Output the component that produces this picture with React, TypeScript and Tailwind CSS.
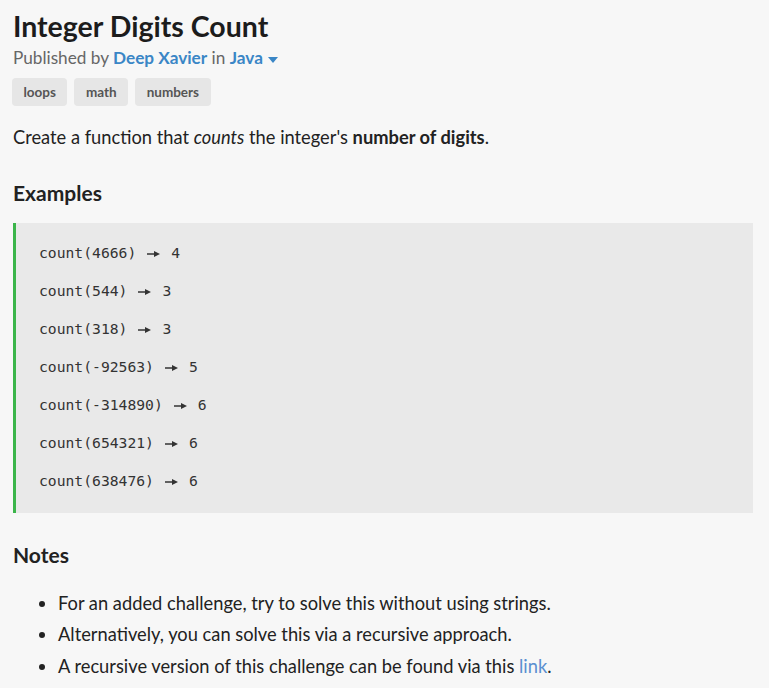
import React from 'react'

const examples = [
  ['count(4666)', '4'],
  ['count(544)', '3'],
  ['count(318)', '3'],
  ['count(-92563)', '5'],
  ['count(-314890)', '6'],
  ['count(654321)', '6'],
  ['count(638476)', '6'],
]

const tags = ['loops', 'math', 'numbers']

const Arrow = () => (
  <svg className="mx-[11px] inline-block align-middle" width="13" height="8" viewBox="0 0 13 8">
    <path d="M0 4 H8" stroke="#333" strokeWidth="1.5" />
    <path d="M7 1 L13 4 L7 7 Z" fill="#333" />
  </svg>
)

export default function App() {
  return (
    <div className="min-h-screen w-full bg-[#f7f7f7] text-[#222] font-['Lato','Noto_Sans',sans-serif]">
      <div className="w-[753px] pl-[13px] pt-[8px]">
        <h1 className="text-[28.5px] font-bold leading-[36px] text-[#1c1c1c]">Integer Digits Count</h1>
        <div className="mt-[2px] text-[17.2px] leading-[24px] text-[#666]">
          Published by <span className="font-bold text-[#3a86c6]">Deep Xavier</span> in{' '}
          <span className="font-bold text-[#3a86c6]">Java</span>
          <svg className="ml-[5px] inline-block align-middle" width="10" height="6" viewBox="0 0 10 6">
            <path d="M0 0 L10 0 L5 6 Z" fill="#3a86c6" />
          </svg>
        </div>
        <div className="mt-[8px] -ml-[1px] flex gap-[7px]">
          {tags.map((t) => (
            <span
              key={t}
              className="flex h-[28px] items-center rounded-[4px] bg-[#e6e6e6] px-[11.5px] text-[13.5px] font-bold text-[#555]"
            >
              {t}
            </span>
          ))}
        </div>
        <p className="mt-[17.5px] text-[18.3px] leading-[27px]">
          Create a function that <em>counts</em> the integer's <strong>number of digits</strong>.
        </p>
        <h2 className="mt-[28.5px] text-[21px] font-bold leading-[28px]">Examples</h2>
        <div className="mt-[16px] flex flex-col gap-[14px] border-l-[3px] border-[#3bb54a] bg-[#e9e9e9] pb-[20px] pl-[23px] pt-[18px] font-['DejaVu_Sans_Mono',monospace] text-[14.7px] leading-[24px] text-[#333]">
          {examples.map(([a, b]) => (
            <div key={a}>
              {a}
              <Arrow />
              {b}
            </div>
          ))}
        </div>
        <h2 className="mt-[28px] text-[21px] font-bold leading-[28px]">Notes</h2>
        <ul className="mt-[20.5px] flex list-disc flex-col gap-[4.5px] pl-[45px] text-[18.3px] leading-[27px]">
          <li>For an added challenge, try to solve this without using strings.</li>
          <li>Alternatively, you can solve this via a recursive approach.</li>
          <li>
            A recursive version of this challenge can be found via this{' '}
            <span className="text-[#5a8fd0]">link</span>.
          </li>
        </ul>
      </div>
    </div>
  )
}
